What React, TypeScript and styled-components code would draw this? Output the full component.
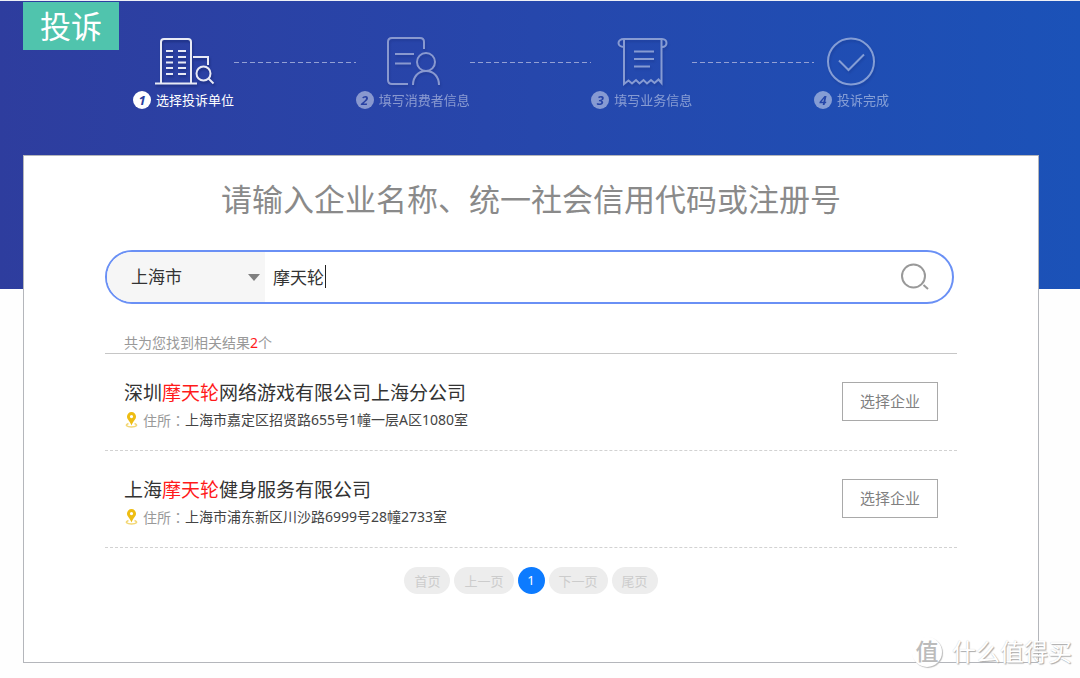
import React, { Fragment, useState } from "react";
import styled, { createGlobalStyle } from "styled-components";

const GlobalStyle = createGlobalStyle`
  * { box-sizing: border-box; }
  body {
    margin: 0;
    background: #fefefe;
    font-family: "Noto Sans", "Noto Sans CJK SC", sans-serif;
    color: #333;
  }
  button, input, select { font-family: inherit; }
`;

const Page = styled.div`
  position: relative;
  border-top: 1px solid #eef0f6;
  padding: 0 41px 15px 23px;
  background: linear-gradient(90deg, #2e3d9e 0%, #2746ab 45%, #1b52b8 100%) 0 0 / 100% 288px no-repeat;
`;

const Header = styled.header`
  display: flex;
  align-items: flex-start;
  height: 154px;
`;

const Tag = styled.h1`
  flex: none;
  margin: 1px 14px 0 0;
  width: 96px;
  height: 48px;
  background: #50c4ad;
  color: #fff;
  font-size: 31px;
  font-weight: 400;
  line-height: 48px;
  text-align: center;
`;

const Steps = styled.ol`
  flex: 1;
  display: flex;
  max-width: 756px;
  margin: 0;
  padding: 35px 0 0;
  list-style: none;
`;

const Step = styled.li<{ $active?: boolean }>`
  flex: none;
  display: flex;
  flex-direction: column;
  align-items: center;
  gap: 4px;
  color: #fff;
  opacity: ${(p) => (p.$active ? 1 : 0.45)};

  svg {
    display: block;
    filter: drop-shadow(1px 2px 1px rgba(10, 20, 80, 0.4));
  }
`;

const StepLabel = styled.span`
  display: flex;
  align-items: center;
  gap: 5px;
  font-size: 13px;
  line-height: 20px;
`;

const StepNumber = styled.b`
  width: 18px;
  height: 18px;
  border-radius: 50%;
  background: #fff;
  color: #2a3f9f;
  font-size: 13px;
  font-style: italic;
  line-height: 18px;
  text-align: center;
`;

const Connector = styled.li`
  flex: 1;
  height: 1px;
  margin-top: 26px;
  background: repeating-linear-gradient(90deg, #93a0d4 0 5px, transparent 5px 8px);
`;

const Card = styled.main`
  min-height: 508px;
  padding: 20px 81px 68px;
  border: 1px solid #b4b6bb;
  background: #fff;
`;

const Title = styled.h2`
  margin: 0;
  color: #8a8a8a;
  font-size: 31px;
  font-weight: 400;
  line-height: 46px;
  text-align: center;
`;

const SearchBar = styled.form`
  display: flex;
  height: 54px;
  margin: 28px 3px 0 0;
  border: 2px solid #6a90f5;
  border-radius: 27px;
  overflow: hidden;
`;

const CityBox = styled.div`
  flex: none;
  display: flex;
  align-items: center;
  width: 158px;
  padding: 0 5px 0 24px;
  background: #f6f6f6;
`;

const CitySelect = styled.select`
  flex: 1;
  height: 50px;
  padding: 0 0 2px;
  border: 0;
  outline: 0;
  appearance: none;
  background: transparent;
  color: #333;
  font-size: 17px;
`;

const KeywordBox = styled.div`
  position: relative;
  flex: 1;
`;

const KeywordInput = styled.input`
  width: 100%;
  height: 50px;
  padding: 0 8px 2px;
  border: 0;
  outline: 0;
  background: transparent;
  color: #333;
  font-size: 17px;
`;

const Caret = styled.span`
  position: absolute;
  top: 13px;
  left: 60px;
  width: 1px;
  height: 23px;
  background: #222;
`;

const SearchButton = styled.button`
  flex: none;
  width: 74px;
  padding: 0;
  border: 0;
  background: transparent;
  cursor: pointer;

  svg { display: block; margin: 0 auto; }
`;

const Summary = styled.p`
  margin: 28px 0 0;
  padding: 0 19px;
  border-bottom: 1px solid #c6c6c6;
  color: #999;
  font-size: 14px;
  line-height: 21px;
`;

const Mark = styled.em`
  color: #ff1a1a;
  font-style: normal;
`;

const Results = styled.ul`
  margin: 0;
  padding: 0;
  list-style: none;
`;

const Result = styled.li`
  display: flex;
  align-items: flex-start;
  justify-content: space-between;
  height: 97px;
  padding: 24px 19px 0;
  border-bottom: 1px dashed #d2d2d2;
`;

const Company = styled.h3`
  margin: 0;
  font-size: 19px;
  font-weight: 400;
  line-height: 30px;
`;

const Address = styled.p`
  display: flex;
  align-items: center;
  margin: 0;
  color: #444;
  font-size: 14px;
  line-height: 24px;

  svg { margin: 0 5px 0 1px; }
`;

const AddressLabel = styled.span`
  color: #999;
  font-family: "Noto Sans CJK TC", sans-serif;
`;

const ChooseButton = styled.button`
  flex: none;
  width: 96px;
  height: 39px;
  margin-top: 4px;
  padding: 0 0 2px;
  border: 1px solid #a9a9a9;
  background: #fff;
  color: #808080;
  font-size: 15px;
  cursor: pointer;
`;

const Pager = styled.nav`
  display: flex;
  justify-content: center;
  gap: 4px;
  margin-top: 19px;
`;

const PageButton = styled.button<{ $current?: boolean }>`
  min-width: 27px;
  height: 27px;
  padding: 0 ${(p) => (p.$current ? 0 : 10)}px 1px;
  border: 0;
  border-radius: 14px;
  background: ${(p) => (p.$current ? "#0d7bff" : "#ededed")};
  color: ${(p) => (p.$current ? "#fff" : "#ccc")};
  font-size: 13px;
`;

const Watermark = styled.div`
  position: absolute;
  right: 8px;
  bottom: 8px;
  display: flex;
  align-items: center;
  gap: 10px;
  color: #fff;
  font-size: 24px;
  line-height: 36px;
  text-shadow: 1px 1px 1px #aaa, 0 0 1px #ccc;
`;

const WatermarkSeal = styled.span`
  width: 30px;
  height: 30px;
  border-radius: 50%;
  box-shadow: 1px 1px 1px #bbb;
  background: #fff;
  color: #bbb;
  font-size: 23px;
  font-weight: 500;
  line-height: 28px;
  text-align: center;
  text-shadow: none;
`;

const BuildingIcon = () => (
  <svg width="62" height="50" viewBox="0 0 62 50" fill="none" stroke="#e8eaf5" strokeWidth="2">
    <path d="M8 47V6q0-3 3-3h24q3 0 3 3v41M2 47.500h42" />
    <path d="M13 15h7M25 15h8M13 21h7M25 21h8M13 26.500h7M25 26.500h8M13 32h7M25 32h8M13 38h7M25 38h8" />
    <path d="M40 21h15v8" />
    <circle cx="50.500" cy="37.500" r="7" />
    <path d="M55.500 42.500l5 5" />
  </svg>
);

const ConsumerIcon = () => (
  <svg width="56" height="50" viewBox="0 0 56 50" fill="none" stroke="#fff" strokeWidth="2">
    <path d="M23 48H7q-4 0-4-4V6q0-4 4-4h28q4 0 4 4v7" />
    <path d="M10 18h19M10 27.500h16" />
    <circle cx="41" cy="26" r="9" />
    <path d="M28 49c0-8 5-14 13-14s13 6 13 14" />
  </svg>
);

const BusinessIcon = () => (
  <svg width="52" height="50" viewBox="0 0 52 50" fill="none" stroke="#fff" strokeWidth="2">
    <path d="M8 3h38M8 3v45l4.500-3.500 3.500 3 4-3.500 3.500 3.500 4-3.500 3.500 3.500 4-3.500 3.500 3 4-3.500 3 3.500V3" />
    <path d="M8 11C4.500 11 2.500 9 2.500 7S4.500 3 8 3M46 11c3 0 4.500-2 4.500-4S49 3 46 3" />
    <path d="M18 15.500h20M18 23h20M18 30.500h16" />
  </svg>
);

const DoneIcon = () => (
  <svg width="50" height="50" viewBox="0 0 50 50" fill="none" stroke="#fff" strokeWidth="2">
    <circle cx="25" cy="25.500" r="23" />
    <path d="M13 24.500l9.500 9.500L38 18.500" />
  </svg>
);

const PinIcon = () => (
  <svg width="13" height="16" viewBox="0 0 13 16">
    <path fill="none" stroke="#f3d774" strokeWidth="1.500" d="M3.500 11.500C-.5 13 1.500 15 6.500 15s7-2 3-3.500" />
    <path fill="#eebd13" fillRule="evenodd" d="M6.500 0a4.500 4.500 0 0 1 4.500 4.700C11 7.500 8 9 6.500 13.500 5 9 2 7.500 2 4.700A4.500 4.500 0 0 1 6.500 0zm0 3a1.600 1.600 0 1 0 0 3.200 1.600 1.600 0 0 0 0-3.200z" />
  </svg>
);

const SearchIcon = () => (
  <svg width="28" height="28" viewBox="0 0 28 28" fill="none" stroke="#999" strokeWidth="2">
    <circle cx="12.500" cy="13" r="11.500" />
    <path d="M22.500 22l4.500 4" />
  </svg>
);

const steps = [
  { label: "选择投诉单位", Icon: BuildingIcon },
  { label: "填写消费者信息", Icon: ConsumerIcon },
  { label: "填写业务信息", Icon: BusinessIcon },
  { label: "投诉完成", Icon: DoneIcon },
];

const results = [
  { before: "深圳", after: "网络游戏有限公司上海分公司", address: "上海市嘉定区招贤路655号1幢一层A区1080室" },
  { before: "上海", after: "健身服务有限公司", address: "上海市浦东新区川沙路6999号28幢2733室" },
];

export default function App() {
  const [keyword, setKeyword] = useState("摩天轮");
  return (
    <Page>
      <GlobalStyle />
      <Header>
        <Tag>投诉</Tag>
        <Steps>
          {steps.map(({ label, Icon }, i) => (
            <Fragment key={label}>
              {i > 0 && <Connector aria-hidden="true" />}
              <Step $active={i === 0}>
                <Icon />
                <StepLabel>
                  <StepNumber>{i + 1}</StepNumber>
                  {label}
                </StepLabel>
              </Step>
            </Fragment>
          ))}
        </Steps>
      </Header>
      <Card>
        <Title>请输入企业名称、统一社会信用代码或注册号</Title>
        <SearchBar onSubmit={(e) => e.preventDefault()}>
          <CityBox>
            <CitySelect aria-label="城市">
              <option>上海市</option>
            </CitySelect>
            <svg width="12" height="7" viewBox="0 0 12 7" aria-hidden="true">
              <path d="M0 0h12L6 7z" fill="#808080" />
            </svg>
          </CityBox>
          <KeywordBox>
            <KeywordInput aria-label="企业名称" value={keyword} onChange={(e) => setKeyword(e.target.value)} />
            {keyword === "摩天轮" && <Caret />}
          </KeywordBox>
          <SearchButton type="submit" aria-label="搜索">
            <SearchIcon />
          </SearchButton>
        </SearchBar>
        <Summary>
          共为您找到相关结果<Mark>2</Mark>个
        </Summary>
        <Results>
          {results.map((r) => (
            <Result key={r.address}>
              <div>
                <Company>
                  {r.before}
                  <Mark>摩天轮</Mark>
                  {r.after}
                </Company>
                <Address>
                  <PinIcon />
                  <AddressLabel>住所：</AddressLabel>
                  {r.address}
                </Address>
              </div>
              <ChooseButton type="button">选择企业</ChooseButton>
            </Result>
          ))}
        </Results>
        <Pager aria-label="分页">
          <PageButton type="button">首页</PageButton>
          <PageButton type="button">上一页</PageButton>
          <PageButton type="button" $current aria-current="page">1</PageButton>
          <PageButton type="button">下一页</PageButton>
          <PageButton type="button">尾页</PageButton>
        </Pager>
      </Card>
      <Watermark>
        <WatermarkSeal>值</WatermarkSeal>
        什么值得买
      </Watermark>
    </Page>
  );
}
